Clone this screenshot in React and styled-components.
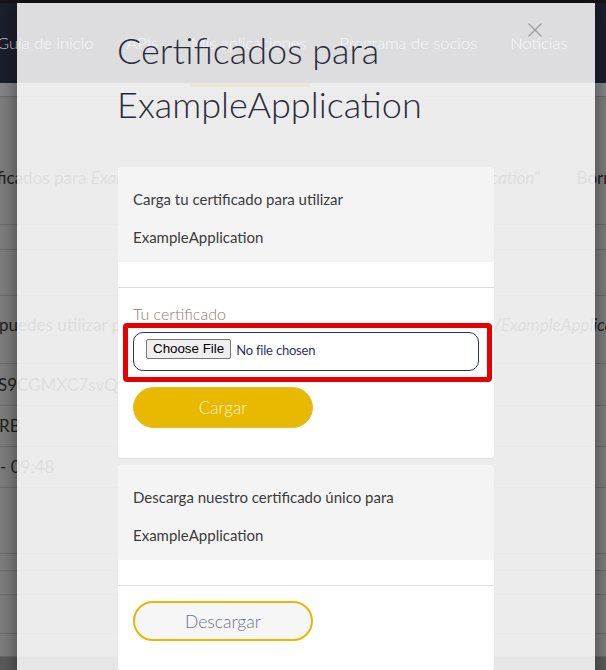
import React from "react";
import styled, { createGlobalStyle, css } from "styled-components";

const GlobalStyle = createGlobalStyle`
  html, body { margin: 0; padding: 0; }
  body {
    width: 606px;
    height: 670px;
    overflow: hidden;
    background: #7d7d7d;
    font-family: Lato, "Open Sans", "Liberation Sans", sans-serif;
  }
  *, *::before, *::after { box-sizing: border-box; }
`;

/* ---------- background page (already dimmed by the backdrop) ---------- */

const Screen = styled.div`
  position: relative;
  width: 606px;
  height: 670px;
  overflow: hidden;
  background: #7d7d7d;
`;

const NavBar = styled.nav`
  height: 83px;
  background: #1b1e2c;
  border-top: 3px solid #151517;
  display: flex;
  align-items: center;
`;

const NavList = styled.ul`
  list-style: none;
  margin: 0 0 0 -3px;
  padding: 0;
  display: flex;
  gap: 33px;
`;

const NavItem = styled.li`
  font-size: 16.5px;
  font-weight: 300;
  color: #cfd0d6;
  white-space: nowrap;
`;

const SubBar = styled.div`
  height: 14px;
  background: #858585;
  border-bottom: 1px solid #6b6b6b;
`;

const ActiveMark = styled.div`
  margin-left: 190px;
  width: 120px;
  height: 4px;
  background: #73600c;
`;

const Row = styled.div`
  height: ${(p) => p.$h}px;
  border-bottom: 1px solid #6b6b6b;
  display: flex;
  align-items: ${(p) => (p.$top !== undefined ? "flex-start" : "center")};
  justify-content: space-between;
  padding-top: ${(p) => p.$top || 0}px;
  font-size: 17px;
  line-height: 20px;
  color: #1f1f1f;
  white-space: nowrap;
`;

const Cell = styled.span`
  margin-left: ${(p) => p.$ml || 0}px;
  margin-right: ${(p) => p.$mr || 0}px;
  display: flex;
  gap: ${(p) => p.$gap || 0}px;
  em { font-style: italic; }
`;

const Footer = styled.div`
  height: 40px;
  background: #5b5b5b;
`;

/* ---------- modal ---------- */

const Modal = styled.div`
  position: absolute;
  top: 3px;
  left: 17px;
  width: 578px;
  height: 720px;
  background: rgba(255, 255, 255, 0.85);
  box-shadow: 0 0 18px rgba(0, 0, 0, 0.45);
  padding-top: 20px;
`;

const CloseButton = styled.button`
  position: absolute;
  top: 20px;
  right: 53px;
  width: 14px;
  height: 14px;
  padding: 0;
  border: 0;
  background: none;
  cursor: pointer;
  display: block;
`;

const Content = styled.div`
  width: 376px;
  margin: 0 auto;
`;

const Title = styled.h2`
  margin: 0 0 36px -1px;
  font-size: 36px;
  font-weight: 300;
  line-height: 54px;
  color: #2a2b3a;
`;

const Card = styled.section`
  background: #fff;
  border-radius: 4px;
  overflow: hidden;
  box-shadow: 0 1px 1px rgba(0, 0, 0, 0.05);
  & + & {
    margin-top: 7px;
  }
`;

const CardHeader = styled.div`
  background: #f4f4f4;
  padding: 13px 15px 6px;
  margin-bottom: 25px;
  font-size: 15px;
  line-height: 38px;
  color: #3b3b3b;
`;

const CardBody = styled.div`
  border-top: 1px solid #dcdcdc;
  padding: 15px 15px 30px;
`;

const FieldLabel = styled.label`
  display: block;
  font-size: 16px;
  font-weight: 300;
  line-height: 22px;
  color: #8a7e70;
  margin-bottom: 7px;
`;

const FileBox = styled.div`
  position: relative;
  height: 39px;
  border: 1px solid #2e3163;
  border-radius: 10px;
  padding: 0 12px;
  display: flex;
  align-items: center;
  gap: 5px;
`;

const ChooseButton = styled.span`
  font-family: "Liberation Sans", Arial, sans-serif;
  font-size: 13.33px;
  line-height: 16px;
  padding: 1px 6px;
  margin-top: -5px;
  background: #efefef;
  border: 1px solid #767676;
  border-radius: 2px;
  color: #000;
`;

const FileName = styled.span`
  font-size: 13px;
  letter-spacing: -0.2px;
  margin-top: -4px;
  color: #2e3163;
`;

const Highlight = styled.span`
  position: absolute;
  top: -10px;
  left: -11px;
  right: -14px;
  bottom: -12px;
  border: 5px solid #e60000;
  border-radius: 4px;
  pointer-events: none;
`;

const PillButton = styled.button`
  display: block;
  width: 180px;
  border-radius: 21px;
  font-family: inherit;
  font-weight: 300;
  cursor: pointer;
  ${(p) =>
    p.$variant === "solid"
      ? css`
          height: 41px;
          margin-top: 16px;
          font-size: 17px;
          background: #e8b900;
          border: 1px solid #e3c12a;
          color: #fbf3d2;
        `
      : css`
          height: 40px;
          font-size: 17.5px;
          background: #f6f6f6;
          border: 2px solid #e8b900;
          color: #6d7290;
        `}
`;

const CloseIcon = () => (
  <svg width="14" height="14" viewBox="0 0 14 14">
    <path d="M0.5 0.5 L13.5 13.5 M13.5 0.5 L0.5 13.5" stroke="#9c9c9c" strokeWidth="1.2" fill="none" />
  </svg>
);

export default function App() {
  return (
    <>
      <GlobalStyle />
      <Screen>
        <NavBar>
          <NavList>
            <NavItem>Guía de inicio</NavItem>
            <NavItem>APIs</NavItem>
            <NavItem>Mis aplicaciones</NavItem>
            <NavItem>Programa de socios</NavItem>
            <NavItem>Noticias</NavItem>
          </NavList>
        </NavBar>
        <SubBar>
          <ActiveMark />
        </SubBar>
        <Row $h={128} $top={71}>
          <Cell $ml={-40}>
            Certificados para&nbsp;<em>ExampleApplication</em>
          </Cell>
          <Cell $mr={-18} $gap={36}>
            <span>
              "<em>ExampleApplication</em>"
            </span>
            <span>Borrar</span>
          </Cell>
        </Row>
        <Row $h={25} />
        <Row $h={46} />
        <Row $h={68} $top={19}>
          <Cell $ml={-1}>puedes utilizar para firmar</Cell>
          <Cell $mr={-35}>
            <em>/ExampleApplication</em>
          </Cell>
        </Row>
        <Row $h={42}>
          <Cell $ml={-2}>S9CGMXC7svQT4kR2</Cell>
        </Row>
        <Row $h={41}>
          <Cell $ml={-1}>RB</Cell>
        </Row>
        <Row $h={41}>
          <Cell>- 09:48</Cell>
        </Row>
        <Row $h={66} />
        <Row $h={17} />
        <Row $h={24} />
        <Row $h={39} />
        <Row $h={23} />
        <Footer />

        <Modal role="dialog" aria-modal="true">
          <CloseButton aria-label="Cerrar">
            <CloseIcon />
          </CloseButton>
          <Content>
            <Title>
              Certificados para
              <br />
              ExampleApplication
            </Title>

            <Card>
              <CardHeader>
                Carga tu certificado para utilizar
                <br />
                ExampleApplication
              </CardHeader>
              <CardBody>
                <FieldLabel>Tu certificado</FieldLabel>
                <FileBox>
                  <ChooseButton>Choose File</ChooseButton>
                  <FileName>No file chosen</FileName>
                  <Highlight />
                </FileBox>
                <PillButton $variant="solid">Cargar</PillButton>
              </CardBody>
            </Card>

            <Card>
              <CardHeader>
                Descarga nuestro certificado único para
                <br />
                ExampleApplication
              </CardHeader>
              <CardBody>
                <PillButton $variant="outline">Descargar</PillButton>
              </CardBody>
            </Card>
          </Content>
        </Modal>
      </Screen>
    </>
  );
}
